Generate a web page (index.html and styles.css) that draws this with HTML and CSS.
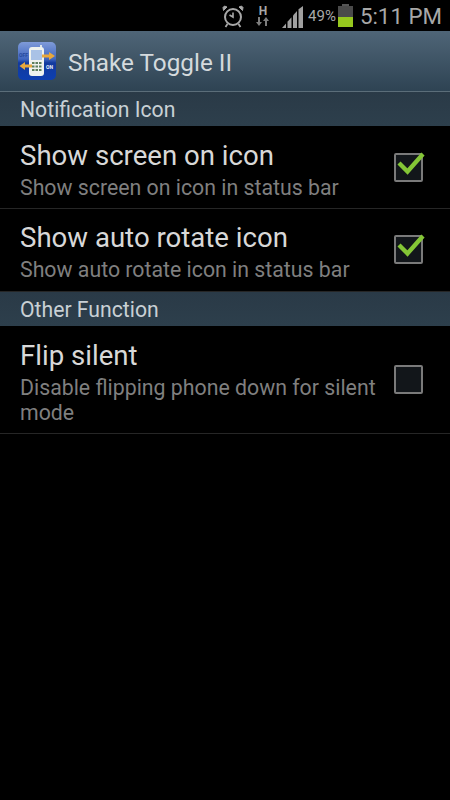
FILE: index.html
```html
<!DOCTYPE html>
<html lang="en">
<head>
    <meta charset="UTF-8">
    <meta name="viewport" content="width=device-width, initial-scale=1.0">
    <title>Shake Toggle II</title>
    <link rel="stylesheet" href="styles.css">
</head>
<body>
    <div class="status-bar">
        <svg class="alarm-icon" width="24" height="24" viewBox="0 0 24 24" fill="none" stroke="#a8a8a8">
            <circle cx="12" cy="13" r="8" stroke-width="2"/>
            <path d="M12 8.500v4.500l-3.500 -2" stroke-width="1.600"/>
            <path d="M2.500 6.500 L6 3 L3.500 2 L2 3.500 Z M21.500 6.500 L18 3 L20.500 2 L22 3.500 Z" fill="#a8a8a8" stroke-width="1"/>
            <path d="M6.500 20l-2 3M17.500 20l2 3" stroke-width="1.800"/>
        </svg>
        <div class="network-icon">
            <span class="network-letter">H</span>
            <svg width="14" height="9" viewBox="0 0 14 9" fill="#7d7d7d">
                <path d="M2 0h2v5h2l-3 4l-3 -4h2z"/>
                <path d="M9 9h2v-5h2l-3 -4l-3 4h2z"/>
            </svg>
        </div>
        <svg class="signal-icon" width="22" height="22" viewBox="0 0 22 22" fill="#a0a0a0">
            <path d="M0 22l4 -4.500v4.500z"/>
            <path d="M5.500 22v-6.200l4 -4.500v10.700z"/>
            <path d="M11 22v-12.400l4 -4.600v17z"/>
            <path d="M16.500 22v-18.700l4.500 -3.300v22z"/>
        </svg>
        <span class="battery-percent">49%</span>
        <div class="battery-icon">
            <div class="battery-cap"></div>
            <div class="battery-empty"></div>
            <div class="battery-level"></div>
        </div>
        <span class="clock">5:11 PM</span>
    </div>

    <div class="title-bar">
        <svg class="app-icon" width="38" height="38" viewBox="0 0 38 38">
            <defs>
                <linearGradient id="iconBg" x1="0" y1="0" x2="0" y2="1">
                    <stop offset="0" stop-color="#7f9bd8"/>
                    <stop offset="0.45" stop-color="#3f66c0"/>
                    <stop offset="0.55" stop-color="#123a9e"/>
                    <stop offset="1" stop-color="#0d3fb0"/>
                </linearGradient>
            </defs>
            <rect width="38" height="38" rx="5" fill="url(#iconBg)"/>
            <text class="icon-label" x="1" y="15" fill="#24479c">OFF</text>
            <text class="icon-label" x="28" y="27" fill="#eef2f8">ON</text>
            <path d="M22 3h2v4h-2z" fill="#dfe6ea"/>
            <rect x="11" y="5" width="15" height="29" rx="3" fill="#eef2ee"/>
            <rect x="13" y="8" width="11" height="10" fill="#a9c2e6"/>
            <path d="M14 20h2.500v2h-2.500zM17.500 20h2.500v2h-2.500zM21 20h2.500v2h-2.500zM14 23.500h2.500v2h-2.500zM17.500 23.500h2.500v2h-2.500zM21 23.500h2.500v2h-2.500zM14 27h2.500v2h-2.500zM17.500 27h2.500v2h-2.500zM21 27h2.500v2h-2.500z" fill="#5d7f5d"/>
            <path d="M24 12.500h7v-2.500l6 4l-6 4v-2.500h-7z" fill="#e8a83c"/>
            <path d="M14 22.500h-7v-2.500l-5.500 4l5.500 4v-2.500h7z" fill="#e8a83c"/>
        </svg>
        <span class="app-title">Shake Toggle II</span>
    </div>

    <div class="section-header">Notification Icon</div>
    <div class="setting-row row-one">
        <div class="setting-text">
            <div class="setting-title">Show screen on icon</div>
            <div class="setting-summary">Show screen on icon in status bar</div>
        </div>
        <div class="checkbox">
            <svg class="check" width="30" height="24" viewBox="0 0 30 24"><path d="M3 10l8.500 8.500L27 1" fill="none" stroke="#84c636" stroke-width="4.300"/></svg>
        </div>
    </div>
    <div class="setting-row row-two">
        <div class="setting-text">
            <div class="setting-title">Show auto rotate icon</div>
            <div class="setting-summary">Show auto rotate icon in status bar</div>
        </div>
        <div class="checkbox">
            <svg class="check" width="30" height="24" viewBox="0 0 30 24"><path d="M3 10l8.500 8.500L27 1" fill="none" stroke="#84c636" stroke-width="4.300"/></svg>
        </div>
    </div>

    <div class="section-header">Other Function</div>
    <div class="setting-row row-three">
        <div class="setting-text">
            <div class="setting-title">Flip silent</div>
            <div class="setting-summary">Disable flipping phone down for silent mode</div>
        </div>
        <div class="checkbox"></div>
    </div>
</body>
</html>
```

FILE: styles.css
```css
html, body {
    margin: 0;
    padding: 0;
    background-color: #000;
}
body {
    width: 450px;
    height: 800px;
    overflow: hidden;
    font-family: Roboto, "Open Sans", sans-serif;
}
.status-bar {
    height: 31px;
    display: flex;
    align-items: center;
    padding-right: 8px;
    justify-content: flex-end;
    background-color: #000;
}
.alarm-icon {
    margin-right: 11px;
}
.network-icon {
    display: flex;
    flex-direction: column;
    align-items: center;
    width: 14px;
    margin-right: 12px;
}
.network-letter {
    font-size: 12px;
    line-height: 12px;
    font-weight: bold;
    color: #a8a8a8;
}
.signal-icon {
    margin-right: 4px;
    margin-top: 2px;
}
.battery-percent {
    font-size: 15px;
    color: #a8a8a8;
    margin-right: 2px;
}
.battery-icon {
    width: 15px;
    height: 23px;
    margin-right: 7px;
    display: flex;
    flex-direction: column;
    align-items: center;
}
.battery-cap {
    width: 7px;
    height: 2px;
    background-color: #555;
}
.battery-empty {
    width: 15px;
    height: 11px;
    background-color: #4a4a4a;
}
.battery-level {
    width: 15px;
    height: 10px;
    background-color: #96c81e;
}
.clock {
    font-size: 22.300px;
    color: #a8a8a8;
}
.title-bar {
    height: 60px;
    display: flex;
    align-items: center;
    padding-left: 18px;
    background: linear-gradient(#4f6577, #2e4353);
    border-bottom: 1px solid #5b6d79;
}
.app-icon {
    margin-right: 12px;
}
.icon-label {
    font-size: 5px;
    font-weight: bold;
}
.app-title {
    font-size: 24.300px;
    margin-top: 2px;
    color: #d4dadd;
}
.section-header {
    height: 34px;
    line-height: 36px;
    padding-left: 20px;
    font-size: 21.200px;
    color: #c8d0d5;
    background: linear-gradient(#2a3a47, #2d3f4c);
}
.setting-row {
    display: flex;
    align-items: center;
    padding: 0 27px 0 20px;
    border-bottom: 1px solid #262626;
    box-sizing: border-box;
}
.row-one {
    height: 83px;
}
.row-two {
    height: 83px;
    padding-bottom: 2px;
}
.row-three {
    height: 108px;
}
.setting-text {
    flex: 1;
    padding-top: 4px;
}
.setting-title {
    font-size: 27.600px;
    line-height: 34px;
    color: #d8d8d8;
}
.setting-summary {
    margin-top: 2px;
    font-size: 21.300px;
    line-height: 25px;
    color: #7f7f7f;
}
.checkbox {
    position: relative;
    width: 25px;
    height: 25px;
    margin-left: 15px;
    border: 2px solid #7a7a7a;
    border-radius: 2px;
    background-color: #12161a;
    flex-shrink: 0;
}
.check {
    position: absolute;
    left: 0;
    top: -2px;
    overflow: visible;
}
```
